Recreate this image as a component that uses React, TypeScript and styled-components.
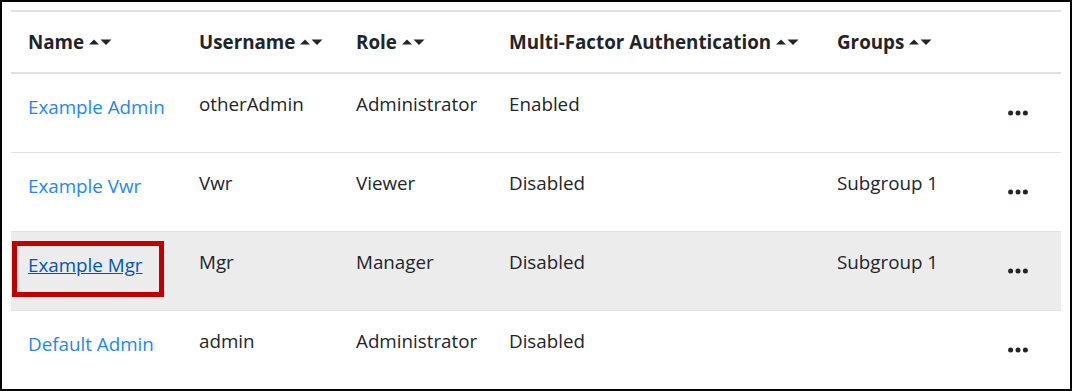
import styled, { createGlobalStyle } from "styled-components";

const GlobalStyle = createGlobalStyle`
  html, body {
    margin: 0;
    padding: 0;
    background: #ffffff;
  }
  body {
    font-family: "Open Sans", "Noto Sans", sans-serif;
    color: #212529;
  }
`;

const Frame = styled.div`
  box-sizing: border-box;
  width: 1072px;
  height: 391px;
  border: 2px solid #000000;
  padding: 8px 9px 0 9px;
  overflow: hidden;
`;

const Table = styled.table`
  width: 1050px;
  border-collapse: collapse;
  table-layout: fixed;
  font-size: 18.8px;
  line-height: 30px;
`;

const HeadCell = styled.th`
  text-align: left;
  font-weight: 700;
  padding: 15px 10px 15px 17px;
  border-top: 2px solid #dee2e6;
  border-bottom: 2px solid #dee2e6;
  white-space: nowrap;
  vertical-align: bottom;
`;

const SortIcon = styled.svg`
  display: inline-block;
  margin-left: 5px;
  vertical-align: middle;
  position: relative;
  top: -1px;
`;

const Row = styled.tr<{ $hover?: boolean }>`
  background: ${({ $hover }) => ($hover ? "#ececec" : "transparent")};
`;

const Cell = styled.td`
  padding: 15px 10px 15px 17px;
  border-top: 1px solid #dee2e6;
  vertical-align: top;
  white-space: nowrap;
`;

const NameCell = styled(Cell)`
  position: relative;
`;

const NameLink = styled.a<{ $hover?: boolean }>`
  display: inline-block;
  padding-top: 3px;
  color: ${({ $hover }) => ($hover ? "#0056b3" : "#1e87f5")};
  text-decoration: ${({ $hover }) => ($hover ? "underline" : "none")};
  cursor: pointer;
`;

const Callout = styled.span`
  position: absolute;
  left: 1px;
  top: 9px;
  width: 152px;
  height: 56px;
  box-sizing: border-box;
  border: 5px solid #c00000;
  pointer-events: none;
`;

const ActionCell = styled(Cell)`
  padding-left: 17px;
`;

const MoreButton = styled.button`
  display: flex;
  align-items: center;
  height: 48px;
  padding: 0;
  border: none;
  background: none;
  cursor: pointer;
`;

type User = {
  name: string;
  username: string;
  role: string;
  mfa: string;
  group: string;
  hover?: boolean;
};

const users: User[] = [
  { name: "Example Admin", username: "otherAdmin", role: "Administrator", mfa: "Enabled", group: "" },
  { name: "Example Vwr", username: "Vwr", role: "Viewer", mfa: "Disabled", group: "Subgroup 1" },
  { name: "Example Mgr", username: "Mgr", role: "Manager", mfa: "Disabled", group: "Subgroup 1", hover: true },
  { name: "Default Admin", username: "admin", role: "Administrator", mfa: "Disabled", group: "" },
];

const columns = ["Name", "Username", "Role", "Multi-Factor Authentication", "Groups"];

function Sort() {
  return (
    <SortIcon width="23" height="7" viewBox="0 0 23 7">
      <polygon points="0,5.5 5,0.5 10,5.5" fill="#212529" />
      <polygon points="11.5,0.5 22.5,0.5 17,6" fill="#212529" />
    </SortIcon>
  );
}

function Dots() {
  return (
    <svg width="20" height="6" viewBox="0 0 20 6">
      <circle cx="2.6" cy="3" r="2.5" fill="#212529" />
      <circle cx="10" cy="3" r="2.5" fill="#212529" />
      <circle cx="17.4" cy="3" r="2.5" fill="#212529" />
    </svg>
  );
}

export default function App() {
  return (
    <>
      <GlobalStyle />
      <Frame>
        <Table>
          <colgroup>
            <col style={{ width: 171 }} />
            <col style={{ width: 157 }} />
            <col style={{ width: 153 }} />
            <col style={{ width: 328 }} />
            <col style={{ width: 171 }} />
            <col style={{ width: 70 }} />
          </colgroup>
          <thead>
            <tr>
              {columns.map((c) => (
                <HeadCell key={c}>
                  {c}
                  <Sort />
                </HeadCell>
              ))}
              <HeadCell />
            </tr>
          </thead>
          <tbody>
            {users.map((u) => (
              <Row key={u.name} $hover={u.hover}>
                <NameCell>
                  <NameLink $hover={u.hover}>{u.name}</NameLink>
                  {u.hover && <Callout />}
                </NameCell>
                <Cell>{u.username}</Cell>
                <Cell>{u.role}</Cell>
                <Cell>{u.mfa}</Cell>
                <Cell>{u.group}</Cell>
                <ActionCell>
                  <MoreButton aria-label="More actions">
                    <Dots />
                  </MoreButton>
                </ActionCell>
              </Row>
            ))}
          </tbody>
        </Table>
      </Frame>
    </>
  );
}
